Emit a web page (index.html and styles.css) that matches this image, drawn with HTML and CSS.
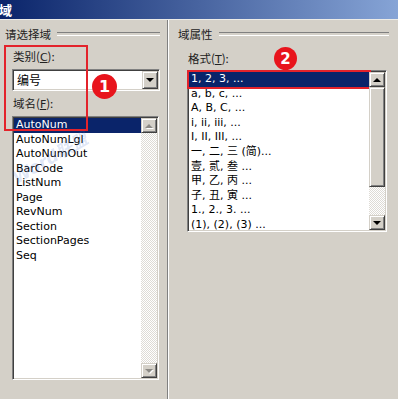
FILE: index.html
```html
<!DOCTYPE html>
<html lang="zh-CN">

<head>
    <meta charset="UTF-8">
    <meta name="viewport" content="width=device-width, initial-scale=1.0">
    <title>域</title>
    <link rel="stylesheet" href="styles.css">
</head>

<body>
    <div class="titlebar"><span class="title">域</span></div>

    <div class="dialog">
        <section class="pane paneLeft">
            <div class="groupTitle"><span>请选择域</span></div>
            <div class="groupBody">
                <div class="label labelCategory">类别(<u>C</u>):</div>
                <div class="combo">
                    <span class="comboText">编号</span>
                    <span class="btn comboBtn"><i class="arrow down"></i></span>
                </div>
                <div class="label labelName">域名(<u>F</u>):</div>
                <div class="listbox listNames">
                    <ul class="items">
                        <li class="selected">AutoNum</li>
                        <li>AutoNumLgl</li>
                        <li>AutoNumOut</li>
                        <li>BarCode</li>
                        <li>ListNum</li>
                        <li>Page</li>
                        <li>RevNum</li>
                        <li>Section</li>
                        <li>SectionPages</li>
                        <li>Seq</li>
                    </ul>
                    <div class="scrollbar">
                        <span class="btn sbBtn"><i class="arrow up off"></i></span>
                        <span class="track"></span>
                        <span class="btn sbBtn"><i class="arrow down off"></i></span>
                    </div>
                </div>
            </div>
            <div class="watermark">Word联盟</div>
            <div class="markBox"></div>
            <div class="badge badgeOne">1</div>
        </section>

        <section class="pane paneRight">
            <div class="groupTitle"><span>域属性</span></div>
            <div class="groupBody">
                <div class="label labelFormat">格式(<u>T</u>):</div>
                <div class="listbox listFormats">
                    <ul class="items">
                        <li class="selected marked">1, 2, 3, ...</li>
                        <li>a, b, c, ...</li>
                        <li>A, B, C, ...</li>
                        <li>i, ii, iii, ...</li>
                        <li>I, II, III, ...</li>
                        <li>一, 二, 三 (简)...</li>
                        <li>壹, 贰, 叁 ...</li>
                        <li>甲, 乙, 丙 ...</li>
                        <li>子, 丑, 寅 ...</li>
                        <li>1., 2., 3. ...</li>
                        <li>(1), (2), (3) ...</li>
                    </ul>
                    <div class="scrollbar">
                        <span class="btn sbBtn"><i class="arrow up"></i></span>
                        <span class="btn thumb"></span>
                        <span class="track"></span>
                        <span class="btn sbBtn"><i class="arrow down"></i></span>
                    </div>
                </div>
            </div>
            <div class="badge badgeTwo">2</div>
        </section>
    </div>
</body>

</html>
```

FILE: styles.css
```css
* {
    box-sizing: border-box;
}

body {
    margin: 0;
    width: 398px;
    height: 399px;
    overflow: hidden;
    background: #d4d0c8;
    font-family: "DejaVu Sans", "Noto Sans CJK SC", sans-serif;
    font-size: 11px;
    color: #000;
}

.titlebar {
    height: 20px;
    background: linear-gradient(to right, #0a246a, #86a4d6);
    border-bottom: 1px solid #ecebe7;
}

.title {
    display: block;
    margin-left: -1px;
    color: #fff;
    font-family: "Noto Sans CJK SC", sans-serif;
    font-weight: bold;
    font-size: 13px;
    line-height: 19px;
}

.dialog {
    display: flex;
    height: 379px;
}

.pane {
    position: relative;
    padding-top: 7px;
}

.paneLeft {
    width: 167px;
    padding-left: 5px;
    padding-right: 7px;
}

.paneRight {
    flex: 1;
    padding-left: 10px;
    padding-right: 9px;
    border-left: 1px solid #808080;
    box-shadow: inset 1px 0 #fff;
}

/* etched group header */
.groupTitle {
    display: flex;
    align-items: center;
    gap: 6px;
    height: 14px;
    font-family: "Noto Sans CJK SC", sans-serif;
    font-size: 11.5px;
    color: #222;
}

.groupTitle::after {
    content: "";
    flex: 1;
    height: 2px;
    border-top: 1px solid #808080;
    border-bottom: 1px solid #fff;
}

.paneLeft .groupBody {
    padding-left: 7px;
}

.paneRight .groupBody {
    padding-left: 9px;
}

.label {
    height: 14px;
    line-height: 14px;
    padding-left: 1px;
    font-family: "Noto Sans CJK SC", sans-serif;
    font-size: 11.5px;
    color: #222;
}

.label u {
    font-family: "DejaVu Sans", sans-serif;
    font-size: 11px;
}

.labelCategory {
    margin-top: 8px;
}

.labelName {
    margin-top: 5px;
}

.labelFormat {
    margin-top: 10px;
}

/* combo box */
.combo {
    display: flex;
    align-items: stretch;
    height: 22px;
    margin-top: 6px;
    background: #fff;
    border: 1px solid;
    border-color: #808080 #fff #fff #808080;
    box-shadow: inset 1px 1px #404040, inset -1px -1px #d4d0c8;
    padding: 1px;
}

.comboText {
    flex: 1;
    padding-left: 3px;
    line-height: 18px;
    font-family: "Noto Sans CJK SC", sans-serif;
    font-size: 12px;
}

.btn {
    display: flex;
    justify-content: center;
    align-items: center;
    background: #d4d0c8;
    border: 1px solid;
    border-color: #d4d0c8 #404040 #404040 #d4d0c8;
    box-shadow: inset 1px 1px #fff, inset -1px -1px #808080;
}

.comboBtn {
    width: 16px;
}

.arrow {
    width: 0;
    height: 0;
    border-left: 4px solid transparent;
    border-right: 4px solid transparent;
}

.arrow.down {
    border-top: 4px solid #000;
}

.arrow.up {
    border-bottom: 4px solid #000;
}

.arrow.off.down {
    border-top-color: #8c8a85;
    filter: drop-shadow(1px 1px 0 #fff);
}

.arrow.off.up {
    border-bottom-color: #8c8a85;
    filter: drop-shadow(1px 1px 0 #fff);
}

/* list boxes */
.listbox {
    display: flex;
    background: #fff;
    border: 1px solid;
    border-color: #808080 #fff #fff #808080;
    box-shadow: inset 1px 1px #404040, inset -1px -1px #d4d0c8;
    padding: 1px;
}

.listNames {
    width: 147px;
    height: 264px;
    margin-top: 6px;
}

.listFormats {
    width: 200px;
    height: 162px;
    margin-top: 5px;
}

.items {
    flex: 1;
    list-style: none;
    margin: 0;
    padding: 0;
}

.items li {
    padding-left: 2px;
    line-height: 14.5px;
    height: 14.5px;
    white-space: nowrap;
}

.listFormats .items li {
    line-height: 14.6px;
    height: 14.6px;
}

.items li.selected {
    background: #0a246a;
    color: #fff;
}

.items li.marked {
    outline: 2px solid #e3232b;
    outline-offset: 0;
}

.scrollbar {
    display: flex;
    flex-direction: column;
    width: 16px;
}

.sbBtn {
    height: 15px;
}

.thumb {
    height: 100px;
}

.track {
    flex: 1;
    background: repeating-conic-gradient(#fff 0 25%, #dedbd5 0 50%) 0 0 / 2px 2px;
}

/* annotations over the screenshot */
.markBox {
    position: absolute;
    left: 4px;
    top: 25px;
    width: 84px;
    height: 86px;
    border: 2px solid #e3232b;
}

.badge {
    position: absolute;
    display: flex;
    justify-content: center;
    align-items: center;
    border-radius: 50%;
    background: #e8141c;
    color: #fff;
    font-family: "DejaVu Sans", sans-serif;
    font-weight: bold;
}

.badgeOne {
    left: 92px;
    top: 54px;
    width: 25px;
    height: 25px;
    font-size: 16px;
}

.badgeTwo {
    left: 106px;
    top: 27px;
    width: 23px;
    height: 23px;
    font-size: 15px;
}

.watermark {
    position: absolute;
    left: 8px;
    top: 128px;
    transform: rotate(-30deg);
    color: #3f6fd0;
    opacity: 0.16;
    font-family: "DejaVu Sans", "Noto Sans CJK SC", sans-serif;
    font-style: italic;
    font-weight: bold;
    font-size: 17px;
    line-height: 20px;
    white-space: nowrap;
    pointer-events: none;
}
```
